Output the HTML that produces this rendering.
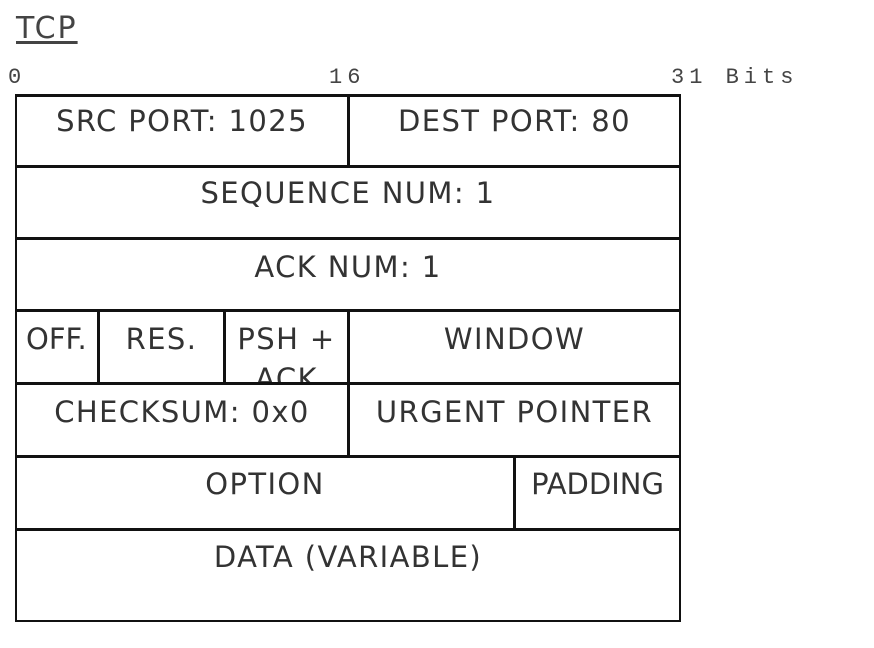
<!DOCTYPE html>
<html><head><meta charset="utf-8"><style>
html,body{margin:0;padding:0;background:#fff;width:874px;height:648px;overflow:hidden;position:relative}
.t{position:absolute;font-family:"DejaVu Sans","Liberation Sans",sans-serif;color:#333;font-size:29px;letter-spacing:1.4px;text-align:center;line-height:32px;overflow:hidden;white-space:nowrap}
.h{position:absolute;height:3px;background:#111}
.v{position:absolute;width:3px;background:#111}
.m{position:absolute;font-family:"Liberation Mono",monospace;font-size:22px;color:#444;letter-spacing:5px;top:65px}
</style></head><body>
<div style="position:absolute;left:16px;top:11px;font-family:'DejaVu Sans',sans-serif;font-size:30px;letter-spacing:2px;color:#444;text-decoration:underline;text-underline-offset:3px">TCP</div>
<div class="m" style="left:8px">0</div>
<div class="m" style="left:329px">16</div>
<div class="m" style="left:671px">31 Bits</div>

<div class="h" style="left:16px;width:665px;top:94px"></div>
<div class="h" style="left:16px;width:665px;top:165px"></div>
<div class="h" style="left:16px;width:665px;top:237px"></div>
<div class="h" style="left:16px;width:665px;top:309px"></div>
<div class="h" style="left:16px;width:665px;top:382px"></div>
<div class="h" style="left:16px;width:665px;top:455px"></div>
<div class="h" style="left:16px;width:665px;top:528px"></div>
<div class="h" style="left:16px;width:665px;top:620px;height:2px"></div>
<div class="v" style="left:15px;top:94px;height:528px;width:2px"></div>
<div class="v" style="left:679px;top:94px;height:528px;width:2px"></div>
<div class="v" style="left:347px;top:94px;height:73px"></div>
<div class="v" style="left:347px;top:309px;height:148px"></div>
<div class="v" style="left:97px;top:309px;height:75px"></div>
<div class="v" style="left:223px;top:309px;height:75px"></div>
<div class="v" style="left:513px;top:455px;height:75px"></div>

<div class="t" style="left:17px;width:330px;top:105px">SRC PORT: 1025</div>
<div class="t" style="left:350px;width:329px;top:105px">DEST PORT: 80</div>
<div class="t" style="left:17px;width:662px;top:177px">SEQUENCE NUM: 1</div>
<div class="t" style="left:17px;width:662px;top:251px">ACK NUM: 1</div>
<div class="t" style="left:17px;width:80px;top:323px;text-align:left;padding-left:9px;letter-spacing:0">OFF.</div>
<div class="t" style="left:100px;width:123px;top:323px">RES.</div>
<div class="t" style="left:226px;width:121px;top:319px;height:63px;line-height:40px;white-space:normal">PSH + ACK</div>
<div class="t" style="left:350px;width:329px;top:323px">WINDOW</div>
<div class="t" style="left:17px;width:330px;top:396px">CHECKSUM: 0x0</div>
<div class="t" style="left:350px;width:329px;top:396px">URGENT POINTER</div>
<div class="t" style="left:17px;width:496px;top:468px">OPTION</div>
<div class="t" style="left:516px;width:163px;top:468px;letter-spacing:0">PADDING</div>
<div class="t" style="left:17px;width:662px;top:541px">DATA (VARIABLE)</div>
</body></html>
